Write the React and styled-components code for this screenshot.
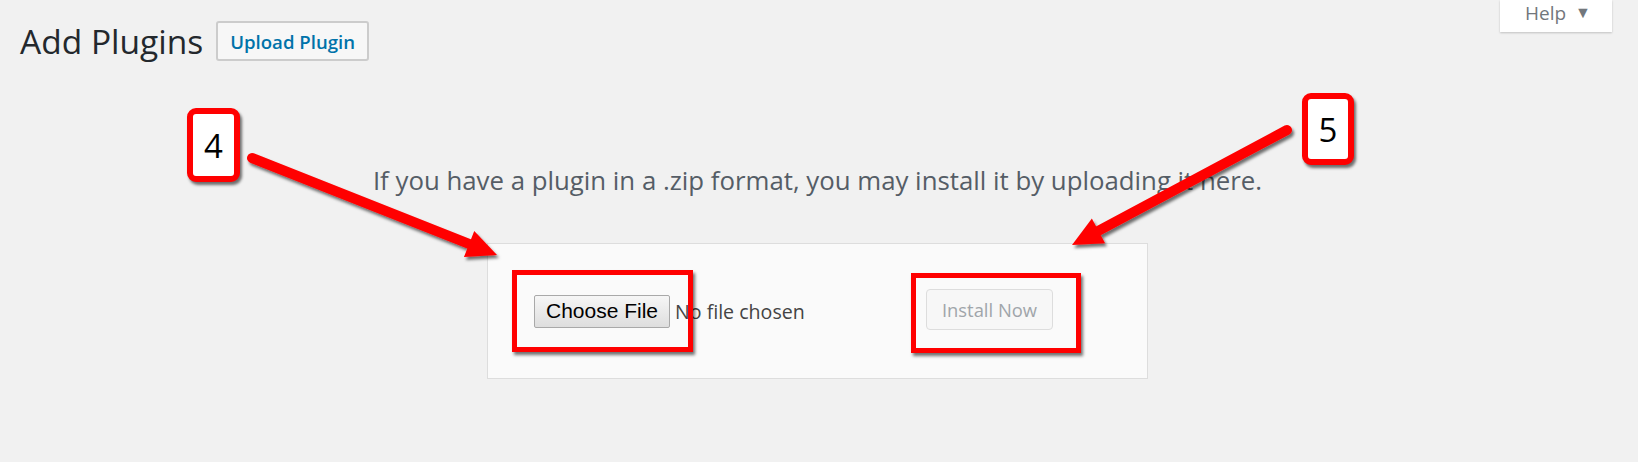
import React from "react";
import styled, { createGlobalStyle } from "styled-components";

const GlobalStyle = createGlobalStyle`
  html, body {
    margin: 0;
    padding: 0;
    background: #f1f1f1;
  }
  body {
    font-family: "Open Sans", "Noto Sans", sans-serif;
    color: #23282d;
  }
`;

const arrows = [
  { from: [252, 158], to: [497, 255] },
  { from: [1287, 130], to: [1072, 245] },
];

const arrowShape = ({ from, to }) => {
  const dx = to[0] - from[0];
  const dy = to[1] - from[1];
  const len = Math.hypot(dx, dy);
  const ux = dx / len;
  const uy = dy / len;
  const head = 30;
  const half = 14;
  const bx = to[0] - ux * head;
  const by = to[1] - uy * head;
  return {
    line: [from[0], from[1], bx + ux * 6, by + uy * 6],
    head: `${to[0]},${to[1]} ${bx - uy * half},${by + ux * half} ${bx + uy * half},${by - ux * half}`,
  };
};

const App = () => {
  return (
    <Page>
      <GlobalStyle />
      <HelpTab>
        Help <Caret>▼</Caret>
      </HelpTab>
      <Wrap>
        <Header>
          <Title>Add Plugins</Title>
          <UploadButton>Upload Plugin</UploadButton>
        </Header>
        <InstallHelp>
          If you have a plugin in a .zip format, you may install it by
          uploading it here.
        </InstallHelp>
        <UploadBox>
          <UploadForm>
            <FileField>
              <ChooseButton>Choose File</ChooseButton>
              <FileName>No file chosen</FileName>
            </FileField>
            <InstallButton disabled>Install Now</InstallButton>
          </UploadForm>
        </UploadBox>
      </Wrap>

      <Badge $left={187} $top={108} $w={53} $h={74}>4</Badge>
      <Badge $left={1302} $top={93} $w={52} $h={72}>5</Badge>
      <Callout $left={512} $top={270} $w={181} $h={82} />
      <Callout $left={911} $top={273} $w={170} $h={80} />

      <ArrowLayer width="1638" height="462" viewBox="0 0 1638 462">
        <defs>
          <filter id="shade" x="-20%" y="-20%" width="140%" height="140%">
            <feDropShadow dx="2" dy="3" stdDeviation="1.5" floodColor="#000" floodOpacity="0.55" />
          </filter>
        </defs>
        {arrows.map((a, i) => {
          const s = arrowShape(a);
          return (
            <g key={i} filter="url(#shade)">
              <line
                x1={s.line[0]}
                y1={s.line[1]}
                x2={s.line[2]}
                y2={s.line[3]}
                stroke="#ff0000"
                strokeWidth="10"
                strokeLinecap="round"
              />
              <polygon points={s.head} fill="#ff0000" />
            </g>
          );
        })}
      </ArrowLayer>
    </Page>
  );
};

const Page = styled.div`
  position: relative;
  width: 1638px;
  height: 462px;
  overflow: hidden;
`;

const HelpTab = styled.div`
  float: right;
  margin-right: 26px;
  width: 112px;
  height: 32px;
  box-sizing: border-box;
  background: #fff;
  box-shadow: 0 1px 2px rgba(0, 0, 0, 0.2);
  color: #72777c;
  font-size: 19px;
  line-height: 24px;
  padding-left: 25px;
`;

const Caret = styled.span`
  font-size: 16px;
  margin-left: 4px;
  vertical-align: 2px;
`;

const Wrap = styled.div`
  padding: 21px 23px 0 20px;
`;

const Header = styled.div`
  display: flex;
  align-items: center;
  gap: 13px;
  height: 40px;
`;

const Title = styled.h1`
  margin: 0;
  font-size: 33.5px;
  font-weight: 400;
  line-height: 40px;
  color: #23282d;
`;

const UploadButton = styled.button`
  height: 40px;
  padding: 0 12px;
  border: 2px solid #ccc;
  border-radius: 3px;
  background: #f7f7f7;
  color: #0073aa;
  font-family: "Open Sans", sans-serif;
  font-size: 18.6px;
  font-weight: 600;
  cursor: pointer;
`;

const InstallHelp = styled.p`
  margin: 104px 0 0;
  text-align: center;
  font-size: 25.8px;
  line-height: 30px;
  color: #555d66;
`;

const UploadBox = styled.div`
  width: 661px;
  height: 136px;
  box-sizing: border-box;
  margin: 48px auto 0;
  border: 1px solid #ddd;
  background: #fafafa;
`;

const UploadForm = styled.form`
  display: flex;
  align-items: center;
  height: 100%;
  padding-left: 46px;
`;

const FileField = styled.div`
  display: flex;
  align-items: center;
  width: 392px;
`;

const ChooseButton = styled.button`
  width: 136px;
  height: 33px;
  border: 1px solid #a9a9a9;
  border-radius: 2px;
  background: linear-gradient(#f6f6f6, #dedede);
  color: #000;
  font-family: "Liberation Sans", Arial, sans-serif;
  font-size: 21px;
  padding: 0;
`;

const FileName = styled.span`
  margin-left: 5px;
  font-size: 19.6px;
  color: #444;
`;

const InstallButton = styled.button`
  width: 127px;
  height: 41px;
  border: 1px solid #ddd;
  border-radius: 4px;
  background: #f7f7f7;
  color: #a0a5aa;
  font-family: "Open Sans", sans-serif;
  font-size: 18.4px;
  margin-top: -4px;
`;

const Badge = styled.div`
  position: absolute;
  left: ${(p) => p.$left}px;
  top: ${(p) => p.$top}px;
  width: ${(p) => p.$w}px;
  height: ${(p) => p.$h}px;
  box-sizing: border-box;
  border: 6px solid #ff0000;
  border-radius: 9px;
  background: #fff;
  box-shadow: 2px 3px 3px rgba(0, 0, 0, 0.55);
  display: flex;
  align-items: center;
  justify-content: center;
  font-family: "Open Sans", sans-serif;
  font-size: 33px;
  color: #000;
`;

const Callout = styled.div`
  position: absolute;
  left: ${(p) => p.$left}px;
  top: ${(p) => p.$top}px;
  width: ${(p) => p.$w}px;
  height: ${(p) => p.$h}px;
  box-sizing: border-box;
  border: 5px solid #ff0000;
  box-shadow: 2px 3px 3px rgba(0, 0, 0, 0.55);
`;

const ArrowLayer = styled.svg`
  position: absolute;
  left: 0;
  top: 0;
  pointer-events: none;
`;

export default App;
